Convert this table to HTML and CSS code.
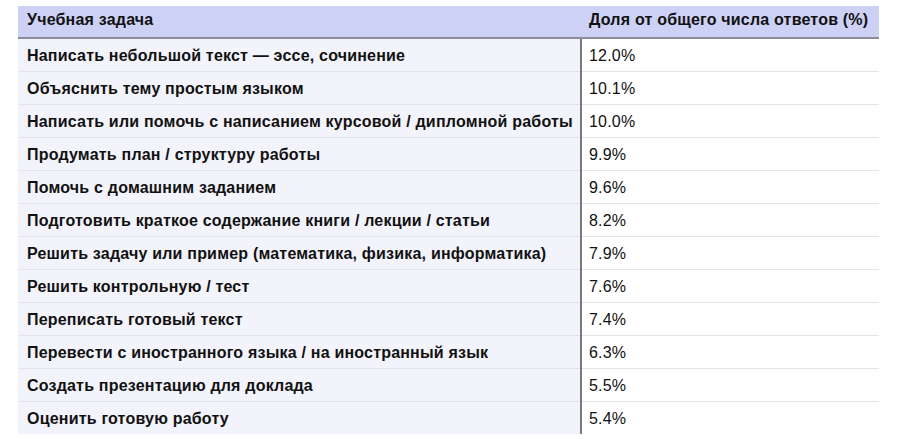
FILE: index.html
```html
<!DOCTYPE html>
<html lang="ru">
<head>
<meta charset="utf-8">
<link rel="stylesheet" href="styles.css">
</head>
<body>
<table class="tbl">
<thead>
<tr><th class="c1">Учебная задача</th><th class="c2">Доля от общего числа ответов (%)</th></tr>
</thead>
<tbody>
<tr><td class="c1">Написать небольшой текст — эссе, сочинение</td><td class="c2">12.0%</td></tr>
<tr><td class="c1">Объяснить тему простым языком</td><td class="c2">10.1%</td></tr>
<tr><td class="c1">Написать или помочь с написанием курсовой / дипломной работы</td><td class="c2">10.0%</td></tr>
<tr><td class="c1">Продумать план / структуру работы</td><td class="c2">9.9%</td></tr>
<tr><td class="c1">Помочь с домашним заданием</td><td class="c2">9.6%</td></tr>
<tr><td class="c1">Подготовить краткое содержание книги / лекции / статьи</td><td class="c2">8.2%</td></tr>
<tr><td class="c1">Решить задачу или пример (математика, физика, информатика)</td><td class="c2">7.9%</td></tr>
<tr><td class="c1">Решить контрольную / тест</td><td class="c2">7.6%</td></tr>
<tr><td class="c1">Переписать готовый текст</td><td class="c2">7.4%</td></tr>
<tr><td class="c1">Перевести с иностранного языка / на иностранный язык</td><td class="c2">6.3%</td></tr>
<tr><td class="c1">Создать презентацию для доклада</td><td class="c2">5.5%</td></tr>
<tr><td class="c1">Оценить готовую работу</td><td class="c2">5.4%</td></tr>
</tbody>
</table>
</body>
</html>
```
FILE: styles.css
```css
html, body {
  margin: 0;
  padding: 0;
  background: #ffffff;
}
body {
  padding: 6px 0 0 18px;
  font-family: "Liberation Sans", Arial, sans-serif;
  color: #111111;
}
.tbl {
  border-collapse: collapse;
  width: 861px;
  table-layout: fixed;
  font-size: 16px;
  letter-spacing: 0.2px;
}
.tbl th, .tbl td {
  text-align: left;
  padding: 0 0 0 9px;
  white-space: nowrap;
  box-sizing: border-box;
}
.tbl th {
  background: #cdd1f6;
  height: 32px;
  font-weight: bold;
  border-bottom: 2px solid #8a8c99;
  padding-bottom: 4px;
}
.tbl th.c1 { width: 563px; }
.tbl th.c2 {
  border-left: 2px solid #cdd1f6;
  padding-left: 7px;
}
.tbl td {
  height: 33px;
  padding-top: 2px;
  border-bottom: 1px solid #e4e4ea;
}
.tbl td.c1 {
  background: #f3f3fb;
  font-weight: bold;
}
.tbl td.c2 {
  background: #ffffff;
  border-left: 2px solid #7a7a7a;
  padding-left: 7px;
}
.tbl tr:last-child td { border-bottom: none; }
```
